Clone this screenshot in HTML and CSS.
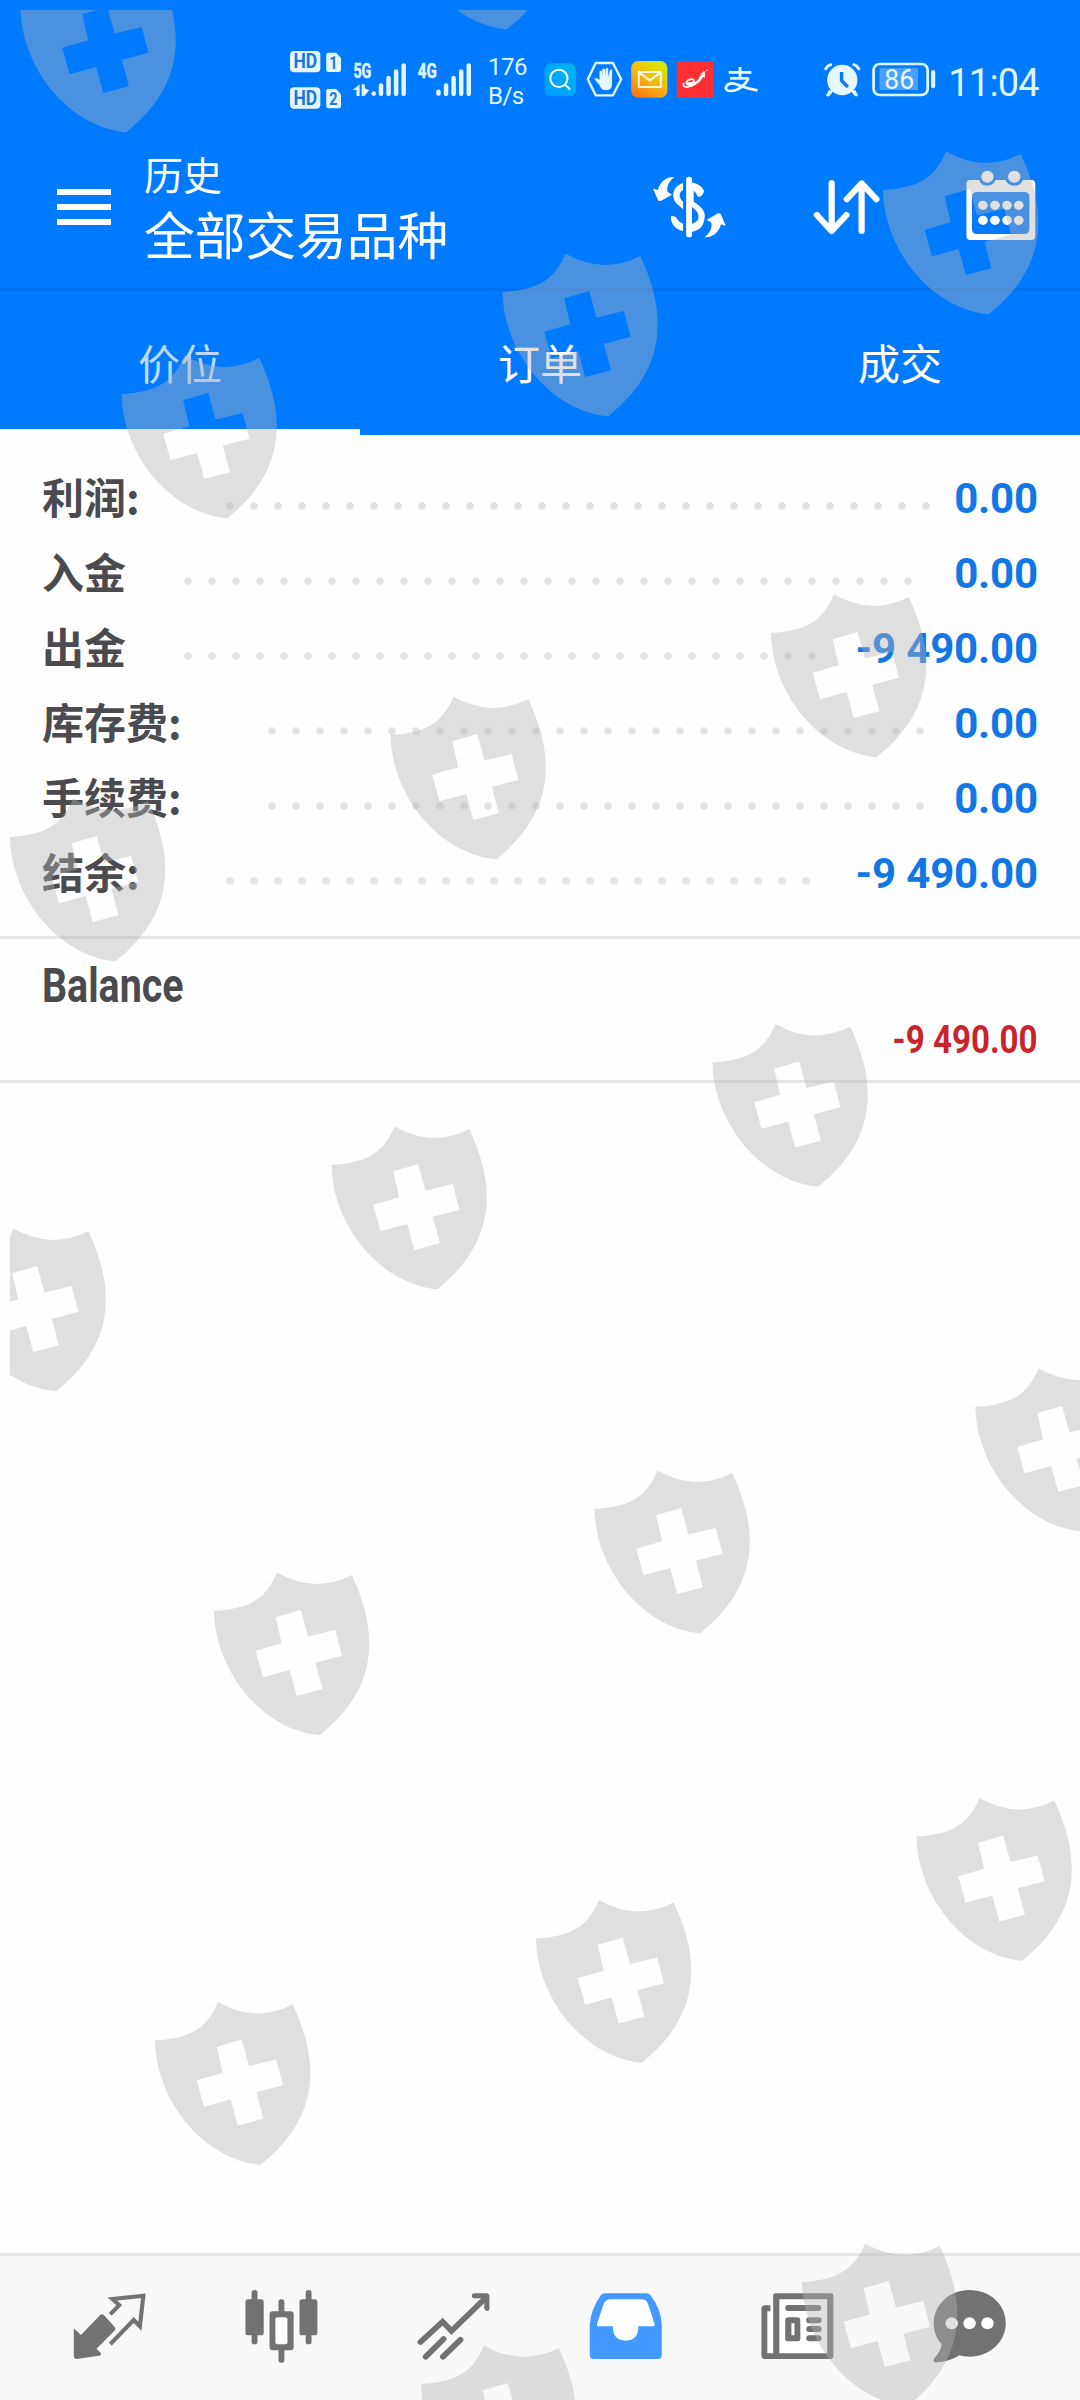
FILE: index.html
```html
<!DOCTYPE html>
<html lang="zh-CN">
<head>
<meta charset="utf-8">
<title>历史</title>
<link rel="stylesheet" href="styles.css">
</head>
<body>
<div class="screen">
  <header class="header">
    <div class="status">
      <svg class="signal" viewBox="839 150 536 180" preserveAspectRatio="none">
        <g fill="#e4f6ff">
          <rect x="842" y="153" width="88" height="64" rx="12"/>
          <rect x="842" y="262" width="88" height="64" rx="12"/>
          <path d="M953 158h23l14 16v36q0 6-6 6h-31q-6 0-6-6v-46q0-6 6-6zM953 267h23l14 16v36q0 6-6 6h-31q-6 0-6-6v-46q0-6 6-6z"/>
        </g>
        <g class="badge-text">
          <text x="852" y="205" font-size="58" textLength="69" lengthAdjust="spacingAndGlyphs">HD</text>
          <text x="852" y="314" font-size="58" textLength="69" lengthAdjust="spacingAndGlyphs">HD</text>
          <text x="956" y="206" font-size="54" textLength="24" lengthAdjust="spacingAndGlyphs">1</text>
          <text x="956" y="315" font-size="54" textLength="24" lengthAdjust="spacingAndGlyphs">2</text>
        </g>
        <g class="net-text">
          <text x="1026" y="235" font-size="63" textLength="52" lengthAdjust="spacingAndGlyphs">5G</text>
          <text x="1213" y="235" font-size="63" textLength="55" lengthAdjust="spacingAndGlyphs">4G</text>
        </g>
        <path fill="#e4f6ff" d="M1044 253v35h-9v-18h-11zM1050 253h9l0 12 13 6-14 17h-8z"/>
        <g stroke="#e4f6ff" stroke-width="13" stroke-linecap="round">
          <path d="M1085 280v1M1106 256v26M1128 234v48M1150 214v68M1172 196v86M1273 275v6M1295 256v26M1317 234v48M1339 214v68M1361 196v86"/>
        </g>
      </svg>
      <div class="speed"><span>176</span><span>B/s</span></div>
      <svg class="notices" viewBox="5 150 635 180" preserveAspectRatio="none">
        <defs>
          <linearGradient id="mail" x1="0" y1="1" x2=".6" y2="0"><stop offset="0" stop-color="#ff6a10"/><stop offset=".55" stop-color="#f5b414"/><stop offset="1" stop-color="#dbe40a"/></linearGradient>
          <linearGradient id="find" x1="0" y1="1" x2="1" y2="0"><stop offset="0" stop-color="#009bff"/><stop offset="1" stop-color="#00b4ee"/></linearGradient>
        </defs>
        <rect x="12" y="190" width="92" height="99" rx="20" fill="url(#find)"/>
        <g fill="none" stroke="#e9fbff" stroke-width="6" stroke-linecap="round"><ellipse cx="54" cy="235" rx="25" ry="26"/><path d="M72 254l13 13"/></g>
        <path d="M161 189h50l24 49-24 48h-50l-23-48z" fill="none" stroke="#dcf5ff" stroke-width="7" stroke-linejoin="round"/>
        <path d="M172 256l-15-20q6-5 15 4v-25q1-6 7-2l1 19V208q4-5 8 0v23l2-26q4-4 7 0l1 27 4-22q5-4 7 2l-1 46q-3 13-18 13-13 0-18-15z" fill="#e4f6ff"/>
        <rect x="264" y="183" width="105" height="110" rx="20" fill="url(#mail)"/>
        <path d="M286 216h64v45h-64zM286 217l32 24 32-24" fill="none" stroke="#fff7dc" stroke-width="6" stroke-linejoin="round"/>
        <path d="M396 184h106v110H396z" fill="#ff3034"/>
        <path d="M474 224l-11-1 15-11 0 21-5-3c-8 15-20 27-36 25 14-5 22-16 29-29z" fill="#fff"/>
        <path d="M449 247c-9 10-26 10-25 1 1-9 22-15 22-6 0 6-14 9-18 6M416 250c-4 10 8 14 20 9 12-4 24-14 31-29" fill="none" stroke="#fff" stroke-width="5" stroke-linecap="round"/>
        <path d="M474 213h5v5h-5zM482 209h4v4h-4z" fill="#ffd0d0"/>
        <g fill="none" stroke="#e9f8ff" stroke-width="8"><path d="M547 217h66M580 201v33M551 235h54"/><path d="M605 235c-9 21-30 38-53 38-12 0-16-8-11-15 6-9 20-9 34-3 17 7 36 13 56 16" stroke-width="8"/></g>
      </svg>
      <svg class="power" viewBox="820 150 330 180" preserveAspectRatio="none">
        <g fill="#e4f6ff"><ellipse cx="876" cy="240" rx="44" ry="46"/><path d="M837 269l10 8-9 11h-8zM914 269l-10 8 9 11h8z"/></g>
        <path d="M828 206q5-9 14-12M924 206q-5-9-14-12M834 285l9-10M917 285l-9-10" fill="none" stroke="#e4f6ff" stroke-width="9" stroke-linecap="round"/>
        <path d="M874 216v26l18 19" fill="none" stroke="#0878f0" stroke-width="10"/>
        <rect x="984" y="204" width="112" height="66" fill="#48a0fb"/>
        <rect x="967" y="192" width="157" height="93" rx="18" fill="none" stroke="#dff6ff" stroke-width="8"/>
        <path d="M1140 216v43" stroke="#dff6ff" stroke-width="12" stroke-linecap="round"/>
        <text class="battery-text" x="998" y="268" font-size="83" textLength="87" lengthAdjust="spacingAndGlyphs">86</text>
      </svg>
      <span class="clock">11:04</span>
    </div>
    <div class="appbar">
      <div class="menu"><i></i><i></i><i></i></div>
      <div class="titles">
        <span class="title-small">历史</span>
        <span class="title-main">全部交易品种</span>
      </div>
      <svg class="ico-currency" viewBox="325 510 220 220" preserveAspectRatio="none" fill="#fff">
        <rect x="427" y="530" width="17" height="182" rx="8"/>
        <path d="M418 549C382 561 382 601 407 617l11 11V605C404 594 407 573 418 570zM449 548c13 4 23 11 30 24-3 16-13 20-19 17-3-9-7-14-11-17v33c24 17 38 29 30 58-4 19-17 29-35 32v-24c22-4 24-27 11-40l-11-10V548zM384 648q7 0 14 4 6 14 20 19v22q-29-6-35-34-1-9 1-11z"/>
        <path d="M393 531c-17 14-23 29-20 44l13 9-33 19-7-1-15-36 14 4c5-23 24-41 48-39zM480 712c17-14 23-29 20-44l-13-9 33-19 7 1 15 36-14-4c-5 23-24 41-48 39z"/>
      </svg>
      <svg class="ico-sort" viewBox="785 510 205 220" preserveAspectRatio="none" fill="none" stroke="#fff" stroke-width="18" stroke-linecap="round" stroke-linejoin="round">
        <path d="M845 549v142M802 645l43 48 43-48M932 693V551M889 598l43-48 43 48"/>
      </svg>
      <svg class="ico-calendar" viewBox="1230 510 215 220" preserveAspectRatio="none" fill="#fff">
        <path fill-rule="evenodd" d="M1248 540h26q5 17 23 17t25-17h29q5 17 25 17t25-17h25q11 0 11 11v158q0 11-11 11h-178q-11 0-11-11V551q0-11 11-11zM1268 576q-15 0-15 15v96q0 15 15 15h137q15 0 15-15v-96q0-15-15-15z"/>
        <circle cx="1298" cy="530" r="18"/><circle cx="1376" cy="530" r="18"/>
        <g><circle cx="1285" cy="616" r="14"/><circle cx="1320" cy="616" r="14"/><circle cx="1355" cy="616" r="14"/><circle cx="1389" cy="616" r="14"/><circle cx="1285" cy="661" r="14"/><circle cx="1320" cy="661" r="14"/><circle cx="1355" cy="661" r="14"/><circle cx="1389" cy="661" r="14"/></g>
      </svg>
    </div>
    <nav class="tabs">
      <div class="tab tab-active">价位</div>
      <div class="tab">订单</div>
      <div class="tab">成交</div>
    </nav>
  </header>

  <section class="summary">
    <div class="row"><span class="label label-3">利润:</span><span class="dots" style="--dots:30"></span><span class="value">0.00</span></div>
    <div class="row"><span class="label label-2">入金</span><span class="dots" style="--dots:31"></span><span class="value">0.00</span></div>
    <div class="row"><span class="label label-2">出金</span><span class="dots" style="--dots:27"></span><span class="value">-9 490.00</span></div>
    <div class="row"><span class="label label-4">库存费:</span><span class="dots" style="--dots:28"></span><span class="value">0.00</span></div>
    <div class="row"><span class="label label-4">手续费:</span><span class="dots" style="--dots:28"></span><span class="value">0.00</span></div>
    <div class="row"><span class="label label-3">结余:</span><span class="dots" style="--dots:25"></span><span class="value">-9 490.00</span></div>
  </section>

  <section class="record">
    <span class="record-name">Balance</span>
    <span class="record-amount">-9 490.00</span>
  </section>

  <main class="blank"></main>

  <footer class="nav">
    <svg viewBox="204 170 230 230" preserveAspectRatio="none" fill="#727272">
      <path d="M215 294l21 20 55-59q6-6 12 0l30 34q6 6 0 12l-52 54 13 14q2 6-5 7l-66 10q-8 0-8-8z"/>
      <path d="M321 252l26-28-20-18 90-10-10 92-18-19-68 72" fill="none" stroke="#727272" stroke-width="12"/>
    </svg>
    <svg viewBox="704 170 230 230" preserveAspectRatio="none" fill="#727272">
      <rect x="714" y="207" width="53" height="108" rx="8"/><rect x="871" y="207" width="52" height="108" rx="8"/>
      <rect x="732" y="179" width="17" height="163" rx="8"/><rect x="889" y="179" width="17" height="163" rx="8"/>
      <rect x="810" y="207" width="17" height="44" rx="8"/><rect x="810" y="352" width="17" height="45" rx="8"/>
      <path fill-rule="evenodd" d="M793 243h52q9 0 9 9v99q0 9-9 9h-52q-9 0-9-9v-99q0-9 9-9z"/>
      <rect x="801" y="261" width="35" height="81" rx="6" fill="#fff"/>
    </svg>
    <svg viewBox="1203 170 230 230" preserveAspectRatio="none" fill="none" stroke="#727272" stroke-width="17" stroke-linecap="round">
      <path d="M1222 335l64-61 26 28 98-98M1237 379l52-53M1287 379l51-51"/>
      <path d="M1379 189h34q9 0 9 9v36q0 8-7 8t-8-8v-21l-9-9h-19q-8-1-8-8t8-7z" fill="#727272" stroke="none"/>
    </svg>
    <svg viewBox="134 170 230 230" preserveAspectRatio="none">
      <path d="M190 189h119q8 0 13 7 29 37 32 85v94q0 11-11 11H156q-11 0-11-11v-94q4-45 31-85 5-7 14-7z" fill="#4299ff"/>
      <path d="M205 207h90q14 0 19 13l20 63q0 5-6 5h-42q0 43-37 43t-37-43h-40q-8 0-6-7l19-60q6-14 20-14z" fill="#fff"/>
    </svg>
    <svg viewBox="635 170 230 230" preserveAspectRatio="none">
      <path d="M662 242h8l18-44h157v180H662z" fill="#fff"/>
      <path d="M671 225v18h-9v126h17V197q0-8 8-8h158q9 0 9 9v180q0 8-9 8H655q-10 0-10-9V235q0-10 10-10zM697 207v162h139V207z" fill="#727272" fill-rule="evenodd"/>
      <path d="M723 233h87M784 270h27M784 296h27M784 324h27" stroke="#727272" stroke-width="18" stroke-linecap="round"/>
      <path d="M723 261h26q9 0 9 9v55q0 8-9 8h-26q-9 0-9-8v-55q0-9 9-9zM732 279v36h9v-36z" fill="#727272" fill-rule="evenodd"/>
    </svg>
    <svg viewBox="1133 170 230 230" preserveAspectRatio="none">
      <path d="M1248 179c-58 0-104 44-104 99 0 27 8 47 23 64-2 15-9 28-20 40-5 6-5 14 4 14 26-1 49-8 68-21 9 3 19 4 29 4 58 0 105-44 105-101s-47-99-105-99z" fill="#727272"/>
      <g fill="#fff"><circle cx="1196" cy="279" r="18"/><circle cx="1248" cy="279" r="18"/><circle cx="1300" cy="279" r="18"/></g>
    </svg>
  </footer>

  <svg class="watermark" viewBox="0 0 1080 2400">
    <defs>
      <path id="shield" fill-rule="evenodd" d="M0 38.5C34 36.500 51.700 27.500 63 0Q100.700 21.500 137.700 2.500C167.200 64.500 161.500 118.500 105.700 162.800C47.700 157.500 .7 97.500 0 38.500zM61.700 44.800L67.700 70.800 41.700 78.200 49 104.800 75.700 97.500 82.700 123.500 108.400 116.800 101.400 90.200 128 83.200 121.200 57.500 94 64 86.700 37.500z"/>
      <clipPath id="area"><rect x="10" y="10" width="1070" height="2390"/></clipPath>
    </defs>
    <g clip-path="url(#area)" fill="#b4b4b4" fill-opacity=".412">
      <use href="#shield" x="20.500" y="-30.500"/><use href="#shield" x="401.300" y="-133.500"/>
      <use href="#shield" x="883" y="151.500"/><use href="#shield" x="502.500" y="253.500"/><use href="#shield" x="121.500" y="355.500"/>
      <use href="#shield" x="771" y="594.500"/><use href="#shield" x="390.500" y="696.500"/><use href="#shield" x="10" y="798.500"/>
      <use href="#shield" x="712.500" y="1024"/><use href="#shield" x="331.500" y="1126.500"/><use href="#shield" x="-49.500" y="1228.500"/>
      <use href="#shield" x="975.500" y="1368.500"/><use href="#shield" x="594.500" y="1470.500"/><use href="#shield" x="214" y="1572.500"/>
      <use href="#shield" x="916.500" y="1798"/><use href="#shield" x="536" y="1900"/><use href="#shield" x="155" y="2002"/>
      <use href="#shield" x="802" y="2243.500"/><use href="#shield" x="421" y="2345.500"/>
    </g>
  </svg>
</div>
</body>
</html>
```
FILE: styles.css
```css
* { box-sizing: border-box; }
body { margin: 0; background: #fff; font-family: Roboto, "Noto Sans CJK SC", sans-serif; }
.screen { position: relative; width: 1080px; height: 2400px; display: flex; flex-direction: column; overflow: hidden; background: #fefefe; }
svg { display: block; flex: none; }

.header { background: #007aff; color: #fff; height: 435px; }
.status { display: flex; height: 120px; padding: 50px 0 0 289px; }
.signal { width: 184.600px; height: 60px; }
.badge-text { font-family: Roboto, sans-serif; font-weight: 700; fill: #1a78dc; }
.net-text { font-family: Roboto, sans-serif; font-weight: 700; fill: #e4f6ff; stroke: #e4f6ff; stroke-width: 1.5px; }
.speed { display: flex; flex-direction: column; width: 54px; margin-left: 14.400px; padding-top: 3px; font-size: 24px; line-height: 29px; letter-spacing: -.5px; color: #dff6ff; }
.notices { width: 218.700px; height: 60px; }
.power { width: 113.600px; height: 60px; margin-left: 62px; }
.battery-text { font-family: Roboto, sans-serif; fill: #e9faff; }
.clock { margin-left: 12px; font-size: 38px; line-height: 66px; letter-spacing: -.8px; color: #dff6ff; }

.appbar { display: flex; align-items: center; height: 171px; padding: 7px 0 2px 57px; border-bottom: 3px solid #0072ee; }
.menu { display: flex; flex-direction: column; gap: 9px; width: 54px; }
.menu i { height: 6px; background: #fff; }
.titles { display: flex; flex-direction: column; width: 506px; margin-left: 33px; padding-top: 4px; }
.title-small { font-size: 39px; line-height: 58px; }
.title-main { font-size: 50.700px; line-height: 64px; }
.ico-currency { width: 75.800px; height: 73.300px; margin-left: 1px; }
.ico-sort { width: 70.600px; height: 73.300px; margin-left: 84px; }
.ico-calendar { width: 74px; height: 73.300px; margin-left: 82.500px; }

.tabs { display: grid; grid-template-columns: repeat(3, 1fr); height: 144px; }
.tab { height: 144px; padding-top: 3px; font-size: 42px; line-height: 144px; text-align: center; }
.tab-active { border-bottom: 6px solid #fefefe; color: #bcd9f7; }

.summary { height: 504px; padding: 26px 43px 0; border-bottom: 3px solid #e6e6e6; }
.row { display: flex; height: 75px; line-height: 75px; font-size: 42px; font-weight: 700; }
.label { margin-left: -1px; margin-right: 1px; font-family: "Noto Sans CJK SC", sans-serif; line-height: 70px; color: #4b4b4f; white-space: nowrap; }
.label-2 { width: 133px; }
.label-3 { width: 175px; }
.label-4 { width: 217px; }
.dots { width: calc(var(--dots) * 24px); height: 8px; margin-top: 41px; background: radial-gradient(circle, #e3e3e3 3.400px, transparent 4.200px) 0 0 / 24px 8px repeat-x; }
.value { margin-left: auto; margin-right: -1px; letter-spacing: -.15px; color: #1177e6; white-space: pre; }

.record { display: flex; flex-direction: column; height: 144px; padding: 20px 42px 0; border-bottom: 3px solid #e6e6e6; font-weight: 700; }
.record-name { align-self: flex-start; font-size: 48px; line-height: 54px; color: #4b4b4f; transform: scaleX(.82); transform-origin: left; }
.record-amount { align-self: flex-end; font-size: 39px; line-height: 54px; color: #c9242c; transform: scaleX(.85); transform-origin: right; }

.blank { flex: 1; }
.nav { display: flex; justify-content: space-around; height: 147px; padding: 31px 24px 0; border-top: 3px solid #e6e6e6; background: #f8f8f8; }
.nav svg { width: 79.200px; height: 76.700px; }
.watermark { position: absolute; left: 0; top: 0; width: 1080px; height: 2400px; pointer-events: none; }
```
